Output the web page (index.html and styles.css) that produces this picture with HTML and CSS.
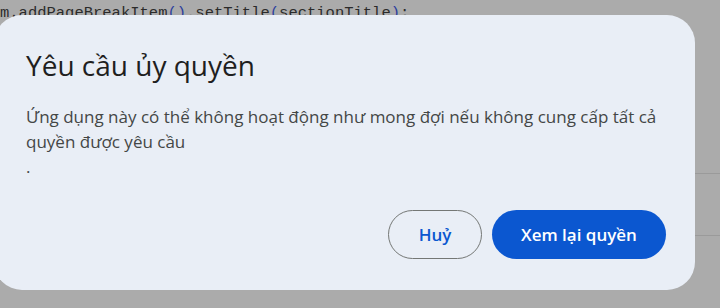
FILE: index.html
```html
<!DOCTYPE html>
<html lang="vi">
<head>
<meta charset="utf-8">
<link rel="stylesheet" href="styles.css">
</head>
<body>
<div class="page">
  <div class="code">m.addPageBreakItem<span class="paren">()</span>.setTitle<span class="paren">(</span>sectionTitle<span class="paren">)</span>;</div>
  <div class="rule rule-a"></div>
  <div class="rule rule-b"></div>
</div>
<div class="dialog" role="dialog">
  <h1 class="title">Yêu cầu ủy quyền</h1>
  <p class="body">Ứng dụng này có thể không hoạt động như mong đợi nếu không cung cấp tất cả<br>quyền được yêu cầu<br>.</p>
  <div class="actions">
    <button class="btn btn-outline">Huỷ</button>
    <button class="btn btn-filled">Xem lại quyền</button>
  </div>
</div>
</body>
</html>
```
FILE: styles.css
```css
html, body {
  margin: 0;
  padding: 0;
  width: 720px;
  height: 308px;
  overflow: hidden;
  background: #ababab;
}
.page {
  display: flex;
  flex-direction: column;
  height: 308px;
}
.code {
  font-family: "Liberation Mono", monospace;
  font-size: 15.5px;
  line-height: 20px;
  color: #2b2b2b;
  padding-top: 3px;
  white-space: nowrap;
}
.paren { color: #2c3f9e; }
.rule {
  border-top: 1px solid #9a9a9a;
}
.rule-a { margin-top: 150px; }
.rule-b { margin-top: 61px; }
.dialog {
  position: absolute;
  left: -6px;
  top: 15px;
  width: 701px;
  height: 275px;
  box-sizing: border-box;
  background: #e9eef6;
  border-radius: 28px;
  padding: 31px 29px 31px 32px;
  display: flex;
  flex-direction: column;
  font-family: "Open Sans", sans-serif;
}
.title {
  margin: 0;
  font-size: 28px;
  font-weight: 400;
  line-height: 38px;
  color: #1f1f1f;
}
.body {
  margin: 20px 0 0;
  font-size: 17px;
  line-height: 25px;
  color: #444746;
}
.actions {
  margin-top: auto;
  display: flex;
  justify-content: flex-end;
  gap: 10px;
}
.btn {
  height: 49px;
  border-radius: 25px;
  font-family: "Open Sans", sans-serif;
  font-size: 17px;
  font-weight: 600;
  padding: 0;
  cursor: pointer;
}
.btn-outline {
  width: 94px;
  background: transparent;
  border: 1px solid #747775;
  color: #0b57d0;
}
.btn-filled {
  width: 174px;
  background: #0b57d0;
  border: none;
  color: #ffffff;
}
```
